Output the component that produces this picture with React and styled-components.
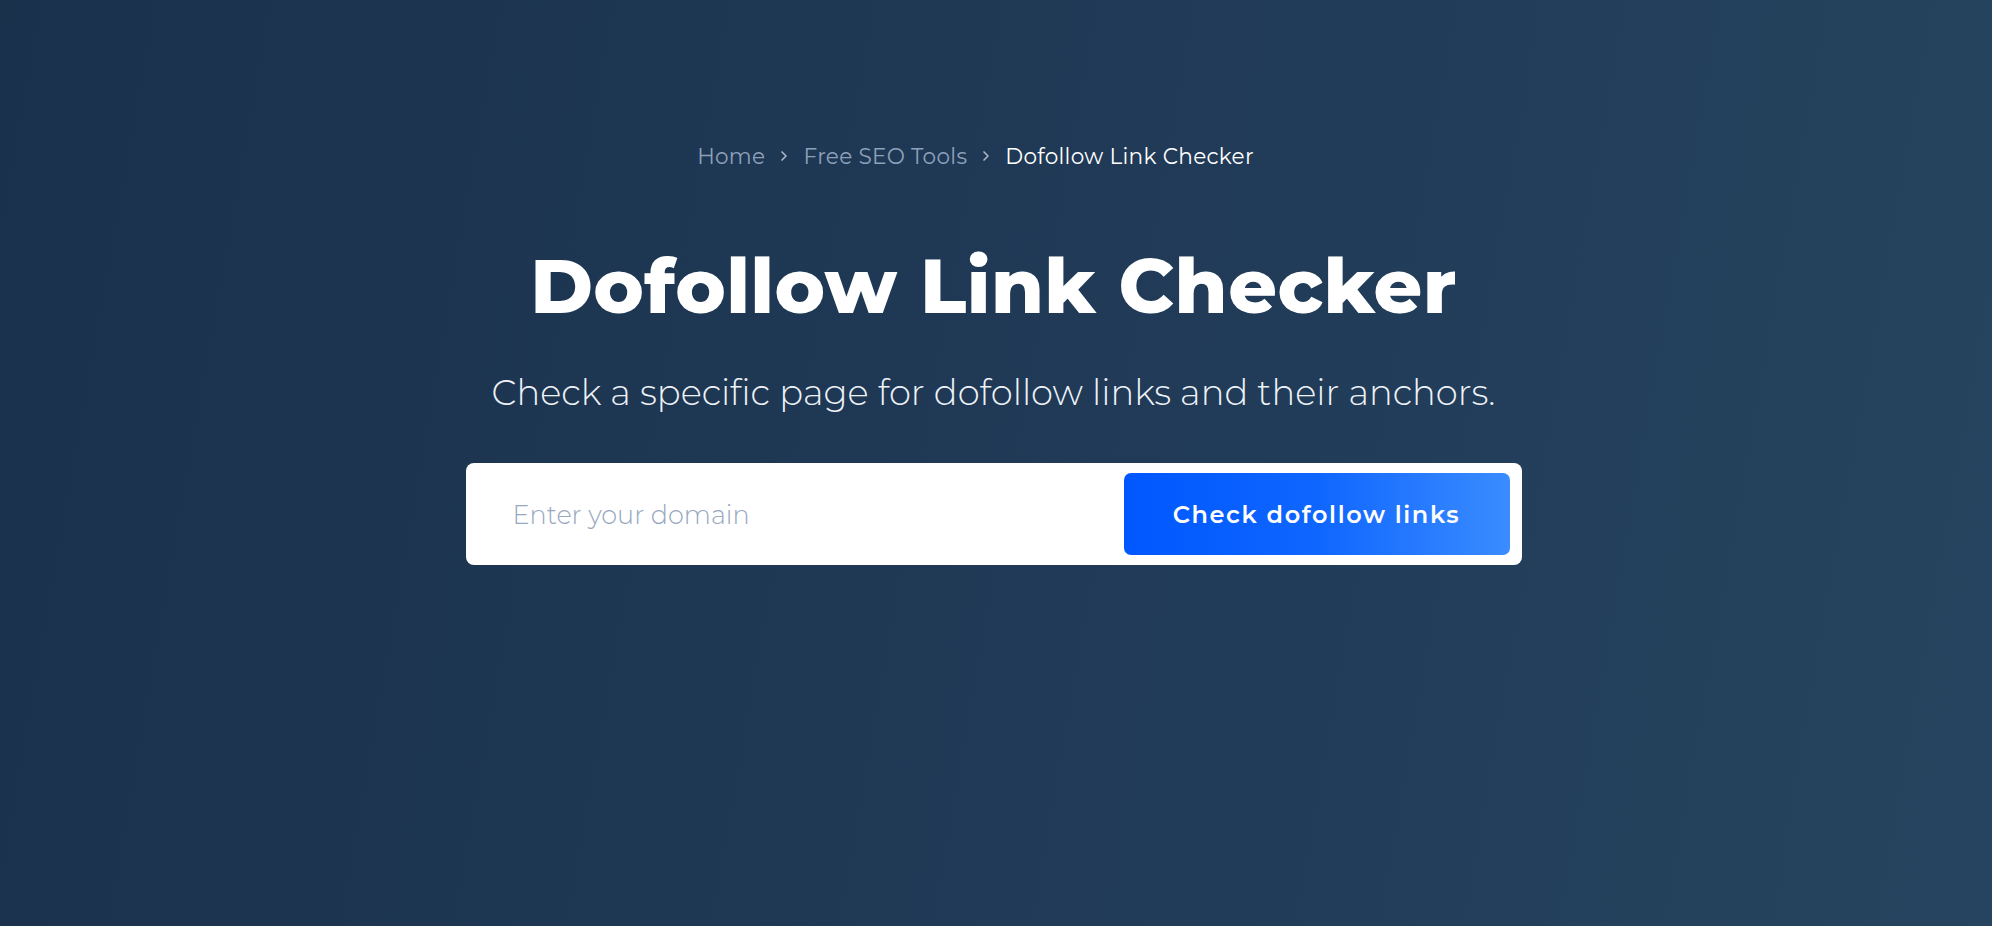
import React from "react";
import styled, { createGlobalStyle } from "styled-components";
import { ChevronRight } from "lucide-react";

const GlobalStyle = createGlobalStyle`
  * { box-sizing: border-box; }
  html, body { margin: 0; padding: 0; }
  body {
    font-family: "Montserrat", Inter, "Noto Sans", sans-serif;
    background: #1c334e;
  }
`;

const Hero = styled.section`
  min-height: 100vh;
  background: linear-gradient(100deg, #1a314c 0%, #203a57 55%, #26445f 100%);
  display: flex;
  flex-direction: column;
  align-items: center;
  padding: 141px 5px 0 0;
  color: #fff;
`;

const Crumbs = styled.nav`
  display: flex;
  align-items: center;
  gap: 11px;
  height: 30px;
  padding-right: 36px;
  font-size: 21.6px;
  font-weight: 400;
  letter-spacing: 0.3px;
`;

const Crumb = styled.a`
  color: ${(props) => (props.current ? "#ffffff" : "#8ea1ba")};
  text-decoration: none;
`;

const Sep = styled.span`
  display: flex;
  color: #a9b6c8;
`;

const Title = styled.h1`
  margin: 69px 0 0;
  font-size: 76px;
  font-weight: 800;
  line-height: 1.2;
  letter-spacing: 0.4px;
`;

const Subtitle = styled.p`
  margin: 39px 0 0;
  font-size: 35.3px;
  font-weight: 300;
  line-height: 1.3;
  color: #eef2f7;
`;

const SearchForm = styled.form`
  margin-top: 47px;
  width: 1056px;
  height: 102px;
  background: #fff;
  border-radius: 8px;
  display: flex;
  align-items: center;
  padding: 10px 12px 10px 45px;
`;

const DomainInput = styled.input`
  flex: 1;
  border: none;
  outline: none;
  background: transparent;
  font-family: inherit;
  font-size: 25.5px;
  font-weight: 300;
  color: #1c334e;
  &::placeholder {
    color: #97a8c0;
  }
`;

const CheckButton = styled.button`
  width: 386px;
  height: 82px;
  border: none;
  border-radius: 7px;
  background: linear-gradient(90deg, #0057ff 0%, #0f66ff 50%, #3b8cff 100%);
  color: #fff;
  font-family: inherit;
  font-size: 24px;
  font-weight: 600;
  letter-spacing: 1.6px;
  cursor: pointer;
`;

export default function App() {
  return (
    <>
      <GlobalStyle />
      <Hero>
        <Crumbs>
          <Crumb href="#">Home</Crumb>
          <Sep>
            <ChevronRight size={16} strokeWidth={2.5} />
          </Sep>
          <Crumb href="#">Free SEO Tools</Crumb>
          <Sep>
            <ChevronRight size={16} strokeWidth={2.5} />
          </Sep>
          <Crumb current>Dofollow Link Checker</Crumb>
        </Crumbs>
        <Title>Dofollow Link Checker</Title>
        <Subtitle>Check a specific page for dofollow links and their anchors.</Subtitle>
        <SearchForm onSubmit={(e) => e.preventDefault()}>
          <DomainInput placeholder="Enter your domain" />
          <CheckButton type="submit">Check dofollow links</CheckButton>
        </SearchForm>
      </Hero>
    </>
  );
}
